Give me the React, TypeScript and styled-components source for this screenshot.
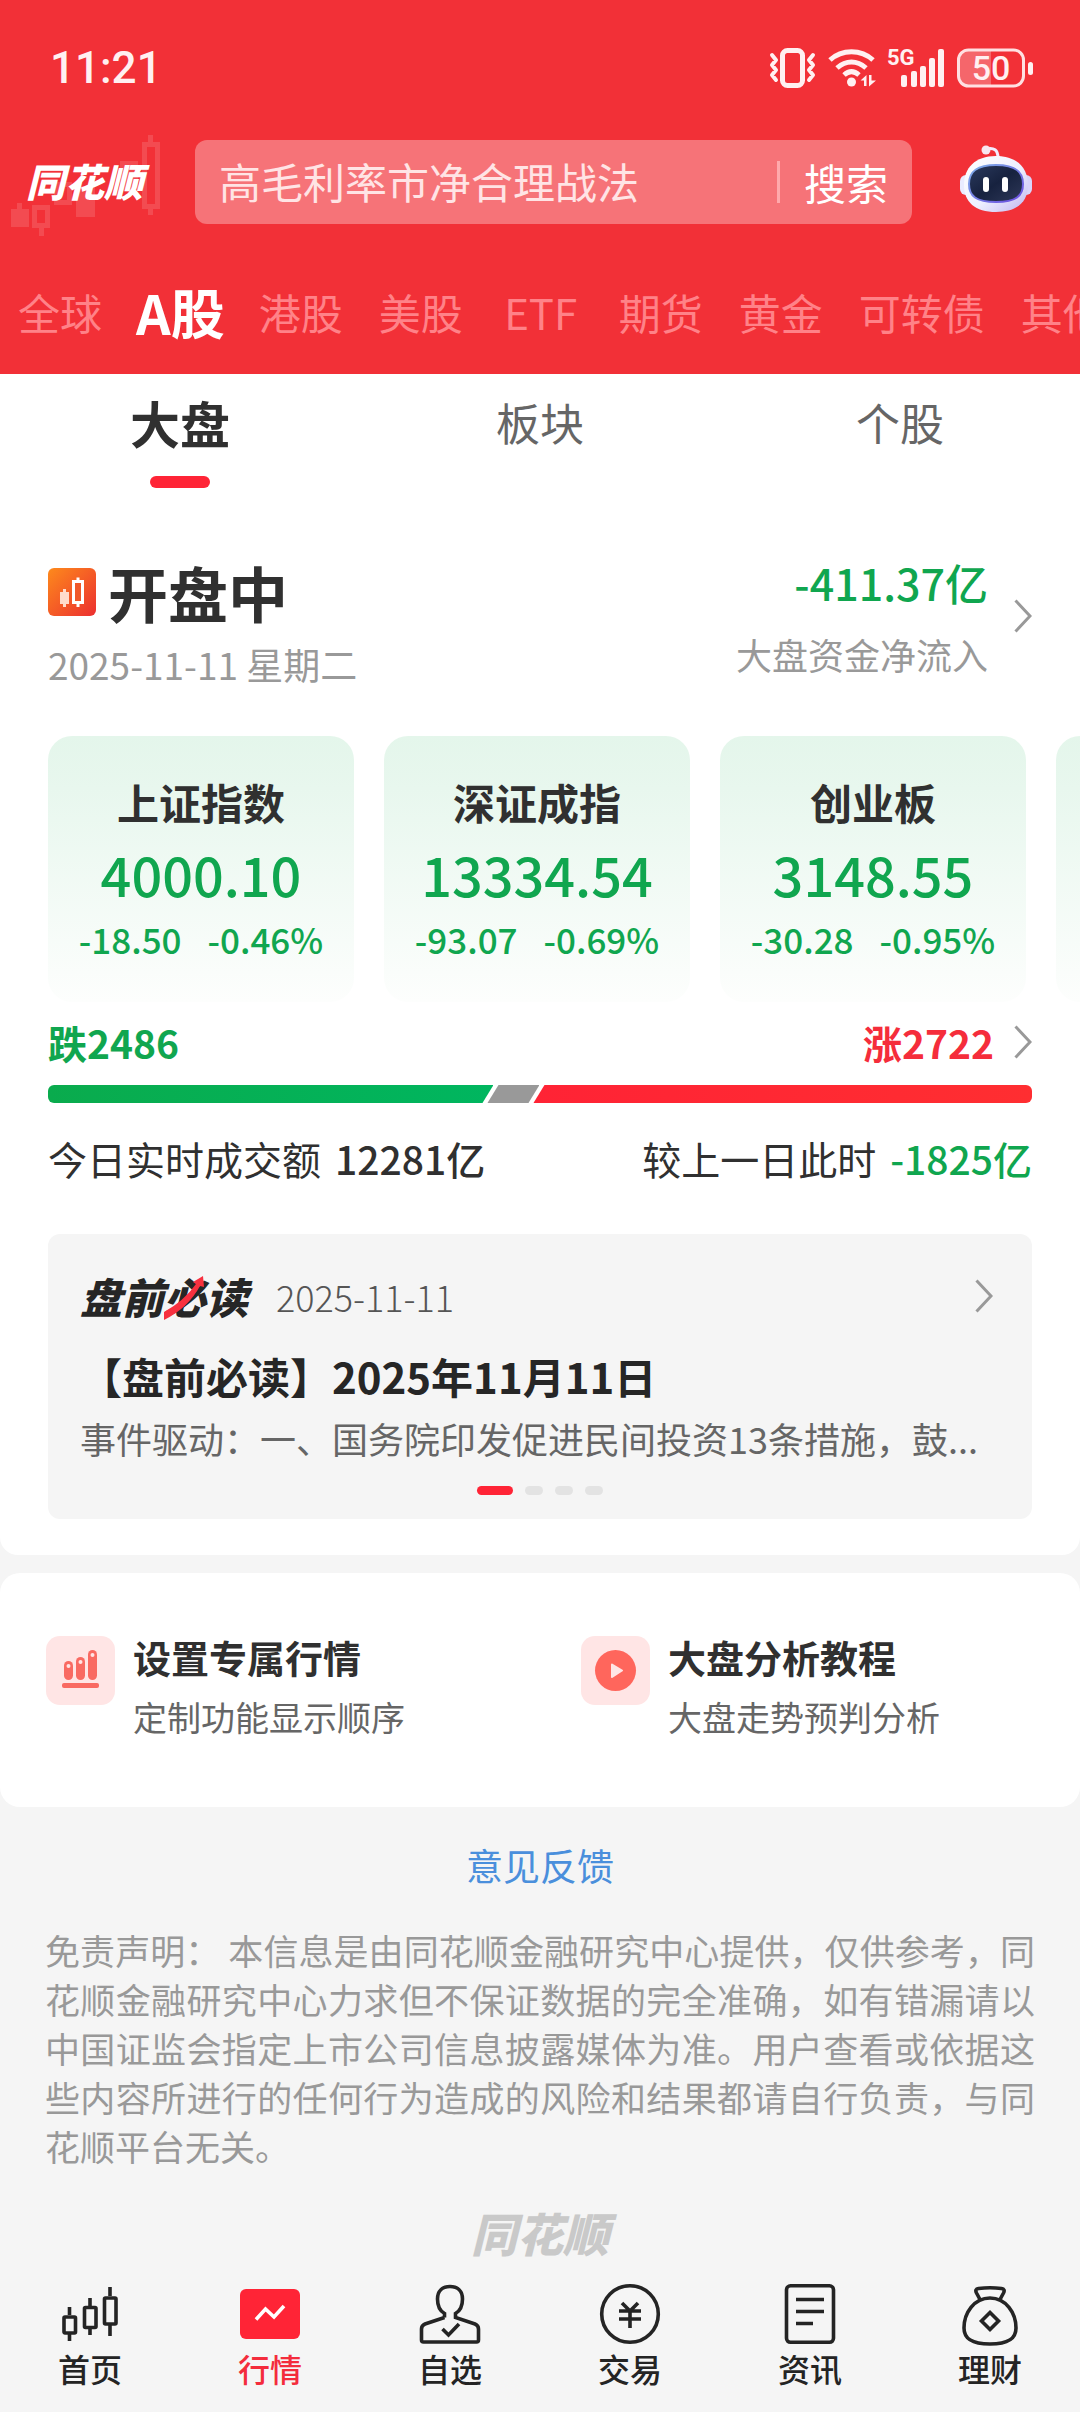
import React from "react";
import styled, { createGlobalStyle, css } from "styled-components";

const GREEN = "#10a64f";
const RED = "#ff2436";
const INK = "#303030";

const GlobalStyle = createGlobalStyle`
  *, *::before, *::after { box-sizing: border-box; }
  body {
    margin: 0;
    background: #f5f5f5;
    color: ${INK};
    font-family: "Noto Sans CJK SC", "Noto Sans", sans-serif;
    -webkit-font-smoothing: antialiased;
  }
  h1, h2, h3, p { margin: 0; }
  a { color: inherit; text-decoration: none; }
  button, input { font: inherit; border: 0; padding: 0; background: none; color: inherit; }
  button { cursor: pointer; }
  svg { display: block; flex: none; }
`;

const Page = styled.div`
  display: flex;
  flex-direction: column;
  min-height: 100vh;
  overflow-x: hidden;
`;

/* ---------- header ---------- */

const Header = styled.header`
  background: #f23037;
  color: #fff;
`;

const StatusBar = styled.div`
  display: flex;
  align-items: center;
  justify-content: space-between;
  height: 136px;
  padding: 0 47px 0 50px;
`;

const Clock = styled.time`
  font-family: Roboto, sans-serif;
  font-size: 44px;
  font-weight: 500;
  line-height: 52px;
  color: #fff0f1;
`;

const StatusIcons = styled.div`
  display: flex;
  align-items: center;
`;

const SearchRow = styled.div`
  position: relative;
  display: flex;
  align-items: center;
  height: 92px;
  padding: 0 46px 0 26px;
`;

const BrandChart = styled.svg`
  position: absolute;
  left: 0;
  top: -10px;
`;

const Brand = styled.h1`
  position: relative;
  width: 169px;
  padding-bottom: 4px;
  font-size: 39px;
  font-weight: 900;
  font-style: italic;
  line-height: 52px;
`;

const SearchForm = styled.form`
  display: flex;
  flex: 1;
  min-width: 0;
  align-items: center;
  height: 84px;
  padding: 0 24px;
  border-radius: 12px;
  background: #f67378;
`;

const SearchInput = styled.input`
  flex: 1;
  min-width: 0;
  height: 64px;
  padding-bottom: 4px;
  font-size: 42px;
  color: #fff;
  outline: none;
  &::placeholder { color: #ffe4e5; opacity: 1; }
`;

const SearchButton = styled.button`
  height: 42px;
  padding-left: 24px;
  border-left: 3px solid #ffa9ac;
  font-size: 42px;
  line-height: 36px;
`;

const RobotButton = styled.button`
  margin-left: 46px;
`;

const MarketTabs = styled.nav`
  display: flex;
  align-items: center;
  gap: 36px;
  height: 146px;
  padding: 22px 0 0 18px;
  overflow: hidden;
`;

const MarketTab = styled.a<{ $active?: boolean }>`
  flex: none;
  min-width: 84px;
  text-align: center;
  font-size: 42px;
  line-height: 72px;
  color: #ff8288;
  ${(p) =>
    p.$active &&
    css`
      margin: 0 -2px;
      font-size: 54px;
      font-weight: 700;
      color: #fff;
    `}
`;

/* ---------- market overview ---------- */

const Overview = styled.main`
  padding: 0 48px 36px;
  border-radius: 0 0 18px 18px;
  background: #fff;
  overflow: hidden;
`;

const SubTabs = styled.nav`
  display: grid;
  grid-template-columns: repeat(3, 1fr);
  margin: 0 -48px 68px;
  padding-top: 16px;
`;

const SubTab = styled.a<{ $active?: boolean }>`
  display: flex;
  flex-direction: column;
  align-items: center;
  font-size: 44px;
  line-height: 64px;
  color: #666;
  ${(p) =>
    p.$active &&
    css`
      font-size: 50px;
      font-weight: 700;
      color: ${INK};
      &::after {
        content: "";
        width: 60px;
        height: 12px;
        margin-top: 22px;
        border-radius: 6px;
        background: ${RED};
      }
    `}
`;

const SessionRow = styled.div`
  display: flex;
  justify-content: space-between;
  align-items: flex-start;
`;

const SessionTitle = styled.h2`
  display: flex;
  align-items: center;
  gap: 12px;
  font-size: 60px;
  font-weight: 700;
  line-height: 72px;
`;

const SessionDate = styled.p`
  margin-top: 14px;
  font-size: 37px;
  line-height: 44px;
  color: #999;
`;

const FlowLink = styled.a`
  display: flex;
  align-items: center;
  gap: 26px;
`;

const FlowText = styled.span`
  display: flex;
  flex-direction: column;
  align-items: flex-end;
  gap: 24px;
`;

const FlowValue = styled.strong`
  font-size: 43px;
  font-weight: 500;
  line-height: 52px;
  color: ${GREEN};
`;

const FlowLabel = styled.span`
  font-size: 36px;
  line-height: 44px;
  color: #999;
`;

const IndexStrip = styled.section`
  display: flex;
  gap: 30px;
  margin: 50px -48px 14px 0;
  overflow: hidden;
`;

const IndexCard = styled.a`
  display: flex;
  flex: 0 0 306px;
  flex-direction: column;
  align-items: center;
  gap: 12px;
  min-height: 266px;
  padding: 38px 0 42px;
  border-radius: 24px;
  background: linear-gradient(180deg, #e4f6eb 0%, #e8f7ee 20%, #fdfefd 100%);
`;

const IndexName = styled.h3`
  font-size: 42px;
  font-weight: 700;
  line-height: 56px;
`;

const IndexValue = styled.strong`
  font-size: 54px;
  font-weight: 500;
  line-height: 64px;
  color: ${GREEN};
`;

const IndexChange = styled.span`
  display: flex;
  gap: 26px;
  font-size: 35px;
  font-weight: 500;
  line-height: 42px;
  color: ${GREEN};
`;

const BreadthRow = styled.a`
  display: flex;
  align-items: center;
  font-size: 39px;
  font-weight: 700;
  line-height: 52px;
`;

const Fallers = styled.span`
  flex: 1;
  color: ${GREEN};
`;

const Risers = styled.span`
  margin-right: 20px;
  color: #f52d3b;
`;

const BreadthBar = styled.div`
  display: flex;
  height: 18px;
  margin: 17px 0 29px;
  border-radius: 6px;
  overflow: hidden;
`;

const Segment = styled.div<{ $kind: "down" | "flat" | "up"; $share?: number }>`
  ${(p) =>
    p.$kind === "down" &&
    css`
      flex: ${p.$share} 1 0;
      background: linear-gradient(90deg, #0aab4d, #00b65f);
      clip-path: polygon(0 0, 100% 0, calc(100% - 11px) 100%, 0 100%);
    `}
  ${(p) =>
    p.$kind === "flat" &&
    css`
      flex: 0 0 52px;
      margin: 0 -6px;
      background: #999;
      clip-path: polygon(11px 0, 100% 0, calc(100% - 11px) 100%, 0 100%);
    `}
  ${(p) =>
    p.$kind === "up" &&
    css`
      flex: ${p.$share} 1 0;
      background: linear-gradient(90deg, #ff2335, #ff2e31);
      clip-path: polygon(11px 0, 100% 0, 100% 100%, 0 100%);
    `}
`;

const Turnover = styled.div`
  display: flex;
  justify-content: space-between;
  font-size: 39px;
  line-height: 52px;
`;

const TurnoverItem = styled.p`
  display: flex;
  gap: 14px;
`;

const Amount = styled.strong<{ $down?: boolean }>`
  font-weight: 500;
  color: ${(p) => (p.$down ? GREEN : INK)};
`;

/* ---------- briefing ---------- */

const Briefing = styled.article`
  margin-top: 50px;
  padding: 30px 32px 24px;
  border-radius: 12px;
  background: #f5f5f5;
`;

const BriefingHead = styled.div`
  display: flex;
  align-items: center;
  height: 64px;
  padding-right: 7px;
`;

const BriefingLogo = styled.span`
  position: relative;
  font-size: 42px;
  font-weight: 900;
  font-style: italic;
  line-height: 60px;
  color: #262626;
`;

const RisingArrow = styled.svg`
  position: absolute;
  left: 84px;
  top: 9px;
`;

const BriefingDate = styled.time`
  flex: 1;
  margin-left: 28px;
  font-size: 36px;
  font-weight: 300;
  line-height: 48px;
  color: #555;
`;

const BriefingTitle = styled.h3`
  margin-top: 20px;
  font-size: 42px;
  font-weight: 700;
  line-height: 56px;
  color: #262626;
`;

const BriefingText = styled.p`
  margin-top: 6px;
  font-size: 36px;
  line-height: 56px;
  color: #666;
  white-space: nowrap;
`;

const Dots = styled.div`
  display: flex;
  justify-content: center;
  gap: 12px;
  margin-top: 20px;
`;

const Dot = styled.button<{ $active?: boolean }>`
  width: ${(p) => (p.$active ? 36 : 18)}px;
  height: 9px;
  border-radius: 5px;
  background: ${(p) => (p.$active ? RED : "#e3e3e3")};
`;

/* ---------- tools and footer ---------- */

const Tools = styled.section`
  display: grid;
  grid-template-columns: 1fr 1fr;
  gap: 82px;
  margin-top: 18px;
  padding: 60px 46px 68px;
  border-radius: 20px;
  background: #fff;
`;

const Tool = styled.a`
  display: flex;
  gap: 18px;
`;

const ToolIcon = styled.svg`
  margin-top: 3px;
`;

const ToolText = styled.span`
  display: flex;
  flex-direction: column;
  gap: 14px;
`;

const ToolName = styled.strong`
  font-size: 38px;
  font-weight: 700;
  line-height: 48px;
`;

const ToolNote = styled.span`
  font-size: 34px;
  line-height: 44px;
  color: #666;
`;

const Feedback = styled.a`
  align-self: center;
  margin-top: 36px;
  font-size: 37px;
  line-height: 44px;
  color: #4a8fdc;
`;

const Disclaimer = styled.p`
  margin-top: 38px;
  padding: 0 45px;
  font-size: 35px;
  line-height: 49px;
  text-align: justify;
  color: #999;
`;

const Watermark = styled.p`
  margin-top: 32px;
  text-align: center;
  font-size: 46px;
  font-weight: 900;
  font-style: italic;
  line-height: 60px;
  color: #c9c9c9;
`;

const BottomNav = styled.nav`
  display: grid;
  grid-template-columns: repeat(6, 1fr);
  margin-top: auto;
  padding: 18px 0 24px;
`;

const NavItem = styled.a<{ $active?: boolean }>`
  display: flex;
  flex-direction: column;
  align-items: center;
  gap: 4px;
  font-size: 32px;
  font-weight: 500;
  line-height: 40px;
  color: ${(p) => (p.$active ? "#f42c3c" : "#242424")};
`;

/* ---------- drawings ---------- */

const Chevron = ({ color = "#999" }: { color?: string }) => (
  <svg width="18" height="34" viewBox="0 0 18 34" fill="none" stroke={color} strokeWidth="3" aria-hidden="true">
    <path d="M1.5 1.5 16 17 1.5 32.5" />
  </svg>
);

const VibrateIcon = () => (
  <svg width="47" height="40" viewBox="0 0 47 40" fill="none" stroke="#fff0f1" strokeWidth="4" strokeLinecap="round" strokeLinejoin="round" aria-hidden="true">
    <rect x="13.500" y="2.500" width="20" height="35" rx="5" strokeWidth="5" />
    <path d="M3 7l4 5-4 5 4 5-4 5 4 5M44 7l-4 5 4 5-4 5 4 5-4 5" />
  </svg>
);

const WifiIcon = () => (
  <svg width="72" height="40" viewBox="-12 0 72 40" fill="none" stroke="#fff0f1" strokeWidth="5" aria-hidden="true">
    <path d="M2 12C14 1 33 1 45 12M9 20c9-8 20-8 29 0M16 27c5-4.500 10-4.500 15 0" />
    <circle cx="23.500" cy="34" r="4.500" fill="#fff0f1" stroke="none" />
    <path fill="#fff0f1" stroke="none" d="M38.500 27v11H36v-5.500h-3.500zM41 27h2.500v5.500H48L41 38.500z" />
  </svg>
);

const SignalLabel = styled.text`
  font-family: Roboto, sans-serif;
  font-size: 22px;
  font-weight: 700;
  fill: #fff0f1;
`;

const SignalIcon = () => (
  <svg width="57" height="60" viewBox="0 -10 57 60" overflow="visible" role="img" aria-label="5G">
    <SignalLabel x="-1" y="17">5G</SignalLabel>
    <g fill="#fff0f1">
      <rect x="13" y="27" width="6" height="12" rx="2" />
      <rect x="23" y="23" width="6" height="16" rx="2" />
      <rect x="32" y="18" width="6" height="21" rx="2" />
      <rect x="41" y="10" width="6" height="29" rx="2" />
      <rect x="50" y="1" width="6" height="38" rx="2" />
    </g>
  </svg>
);

const BatteryLabel = styled.text`
  font-family: Roboto, sans-serif;
  font-size: 34px;
  font-weight: 500;
  fill: #fff0f1;
`;

const BatteryIcon = () => (
  <svg width="88" height="40" viewBox="-12 0 88 40" role="img" aria-label="50%">
    <path d="M11 3h23v34H11a9 9 0 0 1-9-9V12a9 9 0 0 1 9-9z" fill="#f5666b" />
    <rect x="1.500" y="2" width="65" height="36" rx="10" fill="none" stroke="#ffe0e2" strokeWidth="3" />
    <rect x="71" y="14" width="5" height="13" rx="2.500" fill="#fff0f1" />
    <BatteryLabel x="34" y="32" textAnchor="middle">50</BatteryLabel>
  </svg>
);

const RobotIcon = () => (
  <svg width="76" height="84" viewBox="0 0 76 84" aria-hidden="true">
    <defs>
      <linearGradient id="shell" x1="0" y1="0" x2="1" y2="1">
        <stop offset="0" stopColor="#ffffff" />
        <stop offset="0.550" stopColor="#eef0ff" />
        <stop offset="1" stopColor="#bfb4f0" />
      </linearGradient>
      <linearGradient id="visor" x1="0" y1="0" x2="1" y2="1">
        <stop offset="0" stopColor="#2b3a5e" />
        <stop offset="0.500" stopColor="#17223f" />
        <stop offset="1" stopColor="#2e3858" />
      </linearGradient>
      <linearGradient id="rim" x1="0" y1="0" x2="1" y2="1">
        <stop offset="0" stopColor="#7fb0e8" />
        <stop offset="1" stopColor="#6a4be0" />
      </linearGradient>
    </defs>
    <path d="M28 9c8-2 12 1 12 9" fill="none" stroke="#f3ecff" strokeWidth="3" />
    <circle cx="28" cy="10" r="4.500" fill="#f8e6f0" />
    <rect x="2" y="35" width="12" height="20" rx="6" fill="#e9ebff" />
    <rect x="62" y="35" width="12" height="20" rx="6" fill="#d9d4fa" />
    <path d="M38 16c21 0 32 12 32 29S59 72 38 72 6 62 6 45s11-29 32-29z" fill="url(#shell)" />
    <path d="M38 25c20 0 27 7 27 19s-7 18-27 18-27-6-27-18 7-19 27-19z" fill="url(#visor)" stroke="url(#rim)" strokeWidth="2" />
    <rect x="25" y="37" width="6" height="15" rx="3" fill="#fff" />
    <rect x="44" y="37" width="6" height="15" rx="3" fill="#fff" />
  </svg>
);

const SessionIcon = () => (
  <svg width="48" height="48" viewBox="0 0 48 48" aria-hidden="true">
    <defs>
      <linearGradient id="session" x1="0" y1="0" x2="1" y2="1">
        <stop offset="0" stopColor="#fd8a1c" />
        <stop offset="1" stopColor="#ec2f30" />
      </linearGradient>
    </defs>
    <rect width="48" height="48" rx="6" fill="url(#session)" />
    <path d="M12 24h3v-3h3v3h3v12h-3v3h-3v-3h-3z" fill="#ffdccb" />
    <path d="M28.500 9.500h3V12h4.500v24h-4.500v3h-3v-3H24V12h4.500z" fill="#fff" />
    <rect x="27" y="15" width="6" height="18" fill="#f0592a" />
  </svg>
);

const navIcons: Record<string, React.ReactNode> = {
  home: (
    <>
      <path d="M9.500 23v8M9.500 50v7M30 14v8M30 45v6M50 3v9M50 41v11" />
      <rect x="4" y="33" width="11.500" height="16" rx="1" />
      <rect x="24.500" y="23.500" width="11.500" height="20" rx="1" />
      <rect x="44.500" y="14" width="11.500" height="26" rx="1" />
    </>
  ),
  quotes: (
    <>
      <rect x="0" y="5" width="60" height="50" rx="6" fill={RED} stroke="none" />
      <path d="M16 35.500 25.500 25l8.500 8L44 22" stroke="#fff" />
    </>
  ),
  watch: (
    <>
      <path d="M24.500 33.500v-4C20 27 17.500 22.500 17.500 15c0-8 5-12.500 12.500-12.500S42.500 7 42.500 15c0 7.500-2.500 12-7 14.500v4L55 40q3.500 1.500 3.500 5v11q0 2-2 2h-53q-2 0-2-2V45q0-3.500 3.500-5l19.500-6.500" />
      <path d="M22.500 45l6 6L39 40" />
    </>
  ),
  trade: (
    <>
      <circle cx="30" cy="30" r="28.300" />
      <path d="M22 19l8 8 8-8M19 27h22M19 35h22M30 27v17" />
    </>
  ),
  news: (
    <>
      <rect x="6.500" y="1.800" width="47" height="56.500" rx="4" />
      <path d="M16 15.500h28M16 27.500h28M16 39.500h17" />
    </>
  ),
  wealth: (
    <>
      <path d="M20 15.500 16.500 9q-2-4 2-4.500 11.500-1.500 23 0 4 .5 2 4.500L40 15.500" />
      <path d="M30 14C14 14 4 29 4 44c0 11 8 16 26 16s26-5 26-16C56 29 46 14 30 14z" />
      <path d="M30 28.500 38.500 37 30 45.500 21.500 37z" />
    </>
  ),
};

/* ---------- data ---------- */

const marketTabs = ["全球", "A股", "港股", "美股", "ETF", "期货", "黄金", "可转债", "其他"];
const subTabs = ["大盘", "板块", "个股"];
const indices = [
  { name: "上证指数", value: "4000.10", change: "-18.50", percent: "-0.46%" },
  { name: "深证成指", value: "13334.54", change: "-93.07", percent: "-0.69%" },
  { name: "创业板", value: "3148.55", change: "-30.28", percent: "-0.95%" },
];
const navItems = [
  { id: "home", label: "首页" },
  { id: "quotes", label: "行情" },
  { id: "watch", label: "自选" },
  { id: "trade", label: "交易" },
  { id: "news", label: "资讯" },
  { id: "wealth", label: "理财" },
];

export default function App() {
  return (
    <Page>
      <GlobalStyle />
      <Header>
        <StatusBar>
          <Clock>11:21</Clock>
          <StatusIcons>
            <VibrateIcon />
            <WifiIcon />
            <SignalIcon />
            <BatteryIcon />
          </StatusIcons>
        </StatusBar>
        <SearchRow>
          <BrandChart width="170" height="120" viewBox="0 126 170 120" aria-hidden="true">
            <g fill="#fff" opacity="0.13">
              <path d="M11 209h6v-6h5v6h7v18H11z" />
              <path fillRule="evenodd" d="M32 205h18v23h-6v8h-5v-8h-7zm5 5v13h8v-13z" />
              <path fillRule="evenodd" d="M54 182h18v23H54zm5 5v13h8v-13z" />
              <path d="M76 186h19v31H76zM120 161h18v30h-18z" />
              <path fillRule="evenodd" d="M142 142h6v-7h5v7h7v67h-7v6h-5v-6h-6zm5 5v57h8v-57z" />
            </g>
          </BrandChart>
          <Brand>同花顺</Brand>
          <SearchForm onSubmit={(e) => e.preventDefault()}>
            <SearchInput type="text" aria-label="搜索" placeholder="高毛利率市净合理战法" />
            <SearchButton type="submit">搜索</SearchButton>
          </SearchForm>
          <RobotButton type="button" aria-label="智能助手">
            <RobotIcon />
          </RobotButton>
        </SearchRow>
        <MarketTabs>
          {marketTabs.map((tab) => (
            <MarketTab key={tab} href="#" $active={tab === "A股"}>
              {tab}
            </MarketTab>
          ))}
        </MarketTabs>
      </Header>

      <Overview>
        <SubTabs>
          {subTabs.map((tab, i) => (
            <SubTab key={tab} href="#" $active={i === 0}>
              {tab}
            </SubTab>
          ))}
        </SubTabs>

        <SessionRow>
          <div>
            <SessionTitle>
              <SessionIcon />
              开盘中
            </SessionTitle>
            <SessionDate>2025-11-11 星期二</SessionDate>
          </div>
          <FlowLink href="#">
            <FlowText>
              <FlowValue>-411.37亿</FlowValue>
              <FlowLabel>大盘资金净流入</FlowLabel>
            </FlowText>
            <Chevron />
          </FlowLink>
        </SessionRow>

        <IndexStrip>
          {indices.map((item) => (
            <IndexCard key={item.name} href="#">
              <IndexName>{item.name}</IndexName>
              <IndexValue>{item.value}</IndexValue>
              <IndexChange>
                <span>{item.change}</span>
                <span>{item.percent}</span>
              </IndexChange>
            </IndexCard>
          ))}
          <IndexCard href="#" aria-label="更多指数" />
        </IndexStrip>

        <BreadthRow href="#">
          <Fallers>跌2486</Fallers>
          <Risers>涨2722</Risers>
          <Chevron />
        </BreadthRow>
        <BreadthBar>
          <Segment $kind="down" $share={445} />
          <Segment $kind="flat" />
          <Segment $kind="up" $share={498} />
        </BreadthBar>
        <Turnover>
          <TurnoverItem>
            今日实时成交额<Amount>12281亿</Amount>
          </TurnoverItem>
          <TurnoverItem>
            较上一日此时<Amount $down>-1825亿</Amount>
          </TurnoverItem>
        </Turnover>

        <Briefing>
          <BriefingHead>
            <BriefingLogo>
              盘前必读
              <RisingArrow width="42" height="46" viewBox="0 0 42 46" aria-hidden="true">
                <path d="M0 37Q20 26 32 9l-3-2L39 1l1 11-4-1Q24 33 0 45z" fill="#f7303f" />
              </RisingArrow>
            </BriefingLogo>
            <BriefingDate>2025-11-11</BriefingDate>
            <Chevron />
          </BriefingHead>
          <BriefingTitle>【盘前必读】2025年11月11日</BriefingTitle>
          <BriefingText>事件驱动：一、国务院印发促进民间投资13条措施，鼓...</BriefingText>
          <Dots>
            <Dot type="button" aria-label="1" $active />
            <Dot type="button" aria-label="2" />
            <Dot type="button" aria-label="3" />
            <Dot type="button" aria-label="4" />
          </Dots>
        </Briefing>
      </Overview>

      <Tools>
        <Tool href="#">
          <ToolIcon width="69" height="69" viewBox="0 0 69 69" aria-hidden="true">
            <rect width="69" height="69" rx="14" fill="#ffe5e5" />
            <g fill="#f96a62">
              <rect x="18" y="25" width="9" height="19" rx="4.500" />
              <rect x="30" y="21" width="9" height="23" rx="4.500" />
              <rect x="42" y="14" width="9" height="30" rx="4.500" />
              <rect x="16" y="47" width="37" height="5" rx="2" />
            </g>
            <g fill="#ffe5e5">
              <circle cx="22.500" cy="30" r="2" />
              <circle cx="34.500" cy="26" r="2" />
              <circle cx="46.500" cy="19" r="2" />
            </g>
          </ToolIcon>
          <ToolText>
            <ToolName>设置专属行情</ToolName>
            <ToolNote>定制功能显示顺序</ToolNote>
          </ToolText>
        </Tool>
        <Tool href="#">
          <ToolIcon width="69" height="69" viewBox="0 0 69 69" aria-hidden="true">
            <rect width="69" height="69" rx="14" fill="#ffe5e5" />
            <circle cx="34.500" cy="34.500" r="20.500" fill="#ff665c" />
            <path d="M31 28.500 41 34.500 31 41z" fill="#ffe5e5" stroke="#ffe5e5" strokeWidth="2" strokeLinejoin="round" />
          </ToolIcon>
          <ToolText>
            <ToolName>大盘分析教程</ToolName>
            <ToolNote>大盘走势预判分析</ToolNote>
          </ToolText>
        </Tool>
      </Tools>

      <Feedback href="#">意见反馈</Feedback>
      <Disclaimer>
        免责声明： 本信息是由同花顺金融研究中心提供，仅供参考，同花顺金融研究中心力求但不保证数据的完全准确，如有错漏请以中国证监会指定上市公司信息披露媒体为准。用户查看或依据这些内容所进行的任何行为造成的风险和结果都请自行负责，与同花顺平台无关。
      </Disclaimer>
      <Watermark>同花顺</Watermark>

      <BottomNav>
        {navItems.map((item) => (
          <NavItem key={item.id} href="#" $active={item.id === "quotes"}>
            <svg width="60" height="60" viewBox="0 0 60 60" fill="none" stroke="#242424" strokeWidth="3.600" overflow="visible" aria-hidden="true">
              {navIcons[item.id]}
            </svg>
            {item.label}
          </NavItem>
        ))}
      </BottomNav>
    </Page>
  );
}
